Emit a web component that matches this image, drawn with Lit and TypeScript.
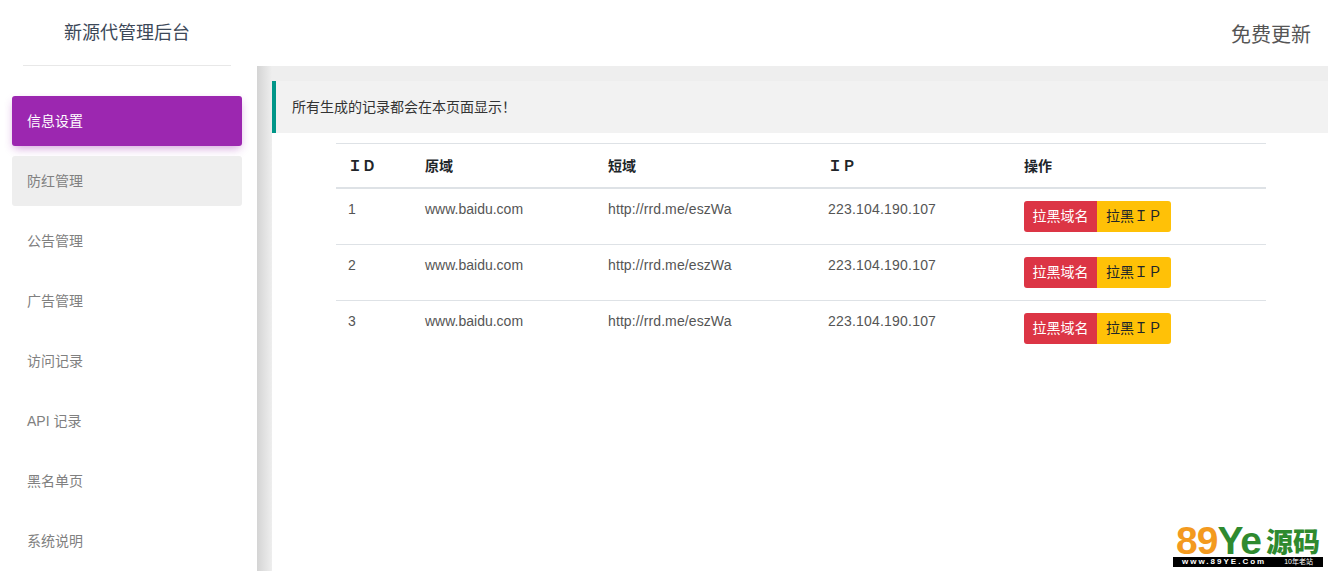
import { LitElement, html, css } from "lit";
import { customElement } from "lit/decorators.js";

const NAV = ["信息设置", "防红管理", "公告管理", "广告管理", "访问记录", "API 记录", "黑名单页", "系统说明"];

@customElement("app-root")
export class AppRoot extends LitElement {
  static styles = css`
    :host {
      display: flex;
      width: 1328px;
      height: 571px;
      overflow: hidden;
      position: relative;
      background: #fff;
      font-family: "Liberation Sans", "Noto Sans CJK SC", sans-serif;
      font-size: 14px;
      color: #333;
    }
    .side {
      width: 257px;
      flex: none;
      display: flex;
      flex-direction: column;
      align-items: stretch;
    }
    .brand {
      margin: 0 26px 0 23px;
      border-bottom: 1px solid #e8e8e8;
      display: flex;
      align-items: center;
      justify-content: center;
      font-size: 18px;
      color: #3c4858;
      padding-bottom: 4px;
      box-sizing: border-box;
      height: 66px;
    }
    .nav {
      display: flex;
      flex-direction: column;
      gap: 10px;
      padding: 30px 15px 0 12px;
    }
    .item {
      height: 50px;
      box-sizing: border-box;
      border-radius: 3px;
      display: flex;
      align-items: center;
      padding: 0 0 2px 15px;
      color: #808080;
      font-size: 14px;
    }
    .item.active {
      background: #9c27b0;
      color: #fff;
      box-shadow: 0 4px 10px -2px rgba(156, 39, 176, 0.45);
    }
    .item.hover {
      background: #eeeeee;
    }
    .main {
      flex: 1;
      display: flex;
      flex-direction: column;
      min-width: 0;
    }
    .top {
      height: 66px;
      flex: none;
      display: flex;
      align-items: center;
      justify-content: flex-end;
      padding: 0 17px 0 0;
      font-size: 20px;
      color: #555;
    }
    .body {
      flex: 1;
      display: flex;
      background: #eee;
    }
    .rail {
      width: 15px;
      flex: none;
      background: linear-gradient(to right, #d4d4d4, #eeeeee);
    }
    .content {
      flex: 1;
      display: flex;
      flex-direction: column;
      padding-top: 15px;
      min-width: 0;
    }
    .alert {
      height: 52px;
      flex: none;
      box-sizing: border-box;
      background: #f2f2f2;
      border-left: 4px solid #009688;
      display: flex;
      align-items: center;
      padding: 0 0 2px 16px;
      font-size: 14px;
      color: #333;
    }
    .panel {
      flex: 1;
      background: #fff;
      padding: 10px 62px 0 64px;
    }
    table {
      width: 930px;
      border-collapse: collapse;
      table-layout: fixed;
      font-size: 14px;
    }
    th {
      text-align: left;
      font-weight: 700;
      font-size: 14px;
      color: #212529;
      height: 44px;
      padding: 0 12px;
      border-top: 1px solid #dee2e6;
      border-bottom: 2px solid #dee2e6;
      box-sizing: border-box;
    }
    td {
      padding: 12px;
      height: 56px;
      box-sizing: border-box;
      vertical-align: top;
      color: #555;
      line-height: 16px;
      border-bottom: 1px solid #dee2e6;
    }
    tr:last-child td {
      border-bottom: none;
    }
    .url {
      letter-spacing: 0.1px;
    }
    .ip {
      letter-spacing: 0.2px;
    }
    .btns {
      display: flex;
    }
    .btn {
      height: 31px;
      display: flex;
      align-items: center;
      justify-content: center;
      font-size: 14px;
      box-sizing: border-box;
    }
    .red {
      width: 73px;
      background: #dc3545;
      color: #fff;
      border-radius: 3px 0 0 3px;
    }
    .yellow {
      width: 74px;
      background: #ffc107;
      color: #212529;
      border-radius: 0 3px 3px 0;
    }
    .wm {
      position: absolute;
      right: 5px;
      bottom: 4px;
      width: 150px;
      height: 42px;
      background: #fff;
      display: flex;
      flex-direction: column;
      justify-content: flex-end;
    }
    .wm-top {
      height: 32px;
      display: flex;
      align-items: baseline;
      line-height: 32px;
      font-weight: 700;
      white-space: nowrap;
      padding-left: 3px;
      font-family: "Liberation Sans", sans-serif;
      font-size: 39px;
      letter-spacing: -1px;
    }
    .wm-num {
      color: #f39a1f;
    }
    .wm-y {
      color: #2f8a2f;
    }
    .wm-cn {
      font-family: "Noto Sans CJK SC", sans-serif;
      font-size: 27px;
      letter-spacing: 0;
      color: #2f8a2f;
      margin-left: 5px;
      font-weight: 900;
      transform: translateY(-2px);
    }
    .wm-bar {
      height: 10px;
      background: #000;
      color: #fff;
      display: flex;
      align-items: center;
      justify-content: space-between;
      font-size: 8px;
      line-height: 10px;
      font-weight: 700;
      padding: 0 10px 0 9px;
      letter-spacing: 2px;
    }
    .wm-old {
      font-weight: 400;
      letter-spacing: 0;
      font-size: 7px;
    }
  `;

  render() {
    const rows = [1, 2, 3];
    return html`
      <aside class="side">
        <div class="brand">新源代管理后台</div>
        <nav class="nav">
          ${NAV.map(
            (n, i) => html`<div class="item ${i === 0 ? "active" : i === 1 ? "hover" : ""}">${n}</div>`
          )}
        </nav>
      </aside>
      <div class="main">
        <header class="top">免费更新</header>
        <div class="body">
          <div class="rail"></div>
          <div class="content">
            <div class="alert">所有生成的记录都会在本页面显示！</div>
            <div class="panel">
              <table>
                <colgroup>
                  <col style="width:77px" />
                  <col style="width:183px" />
                  <col style="width:220px" />
                  <col style="width:196px" />
                  <col style="width:254px" />
                </colgroup>
                <thead>
                  <tr>
                    <th>ＩＤ</th>
                    <th>原域</th>
                    <th>短域</th>
                    <th>ＩＰ</th>
                    <th>操作</th>
                  </tr>
                </thead>
                <tbody>
                  ${rows.map(
                    (r) => html`<tr>
                      <td>${r}</td>
                      <td>www.baidu.com</td>
                      <td class="url">http://rrd.me/eszWa</td>
                      <td class="ip">223.104.190.107</td>
                      <td>
                        <div class="btns">
                          <div class="btn red">拉黑域名</div>
                          <div class="btn yellow">拉黑ＩＰ</div>
                        </div>
                      </td>
                    </tr>`
                  )}
                </tbody>
              </table>
            </div>
          </div>
        </div>
      </div>
      <div class="wm">
        <div class="wm-top">
          <span class="wm-num">89</span><span class="wm-y">Ye</span><span class="wm-cn">源码</span>
        </div>
        <div class="wm-bar"><span>www.89YE.Com</span><span class="wm-old">10年老站</span></div>
      </div>
    `;
  }
}
